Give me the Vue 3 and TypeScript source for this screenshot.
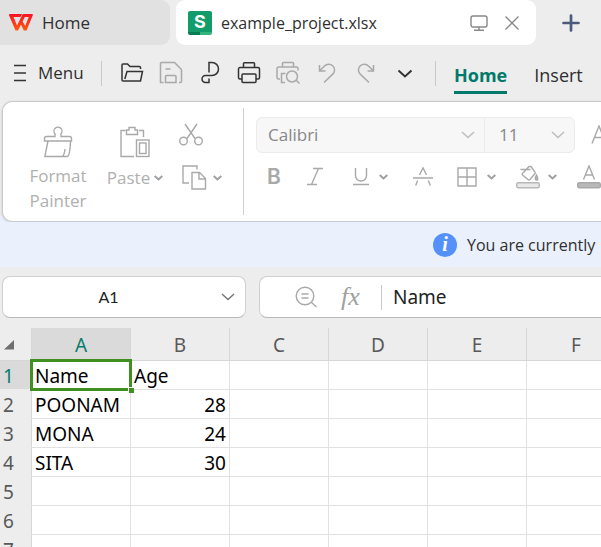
<script setup lang="ts">
import { ref } from 'vue'

const columns = ['A', 'B', 'C', 'D', 'E', 'F']
const rows: (string | number)[][] = [
  ['Name', 'Age'],
  ['POONAM', 28],
  ['MONA', 24],
  ['SITA', 30],
  [],
  [],
  [],
]
const cellName = ref('A1')
const formula = ref('Name')
const fontFamily = ref('Calibri')
const fontSize = ref('11')
</script>

<template>
  <div class="app">
    <nav class="tabs" aria-label="Documents">
      <button class="tab home-tab">
        <svg width="24" height="18" viewBox="0 0 24 18">
          <defs>
            <linearGradient id="brand" x1="0" y1="0" x2="0" y2="1">
              <stop offset="0" stop-color="#fb1026" />
              <stop offset="1" stop-color="#ff5a0a" />
            </linearGradient>
          </defs>
          <path fill="url(#brand)" fill-rule="evenodd" d="M1 0H13L11.5 3H4.500L8 11.500L13.200 1Q13.700 0 14.800 0H23Q24.300 0 23.800 1.200L17.500 16.500H14.800L12 10.500L9 16.500H6.500L0 1.200Q-.2 0 1 0ZM15.800 3L13.600 7.500L16.200 12L19.800 3Z" />
        </svg>
        <span>Home</span>
      </button>
      <div class="tab doc-tab">
        <span class="sheet-logo">S</span>
        <span class="doc-name">example_project.xlsx</span>
        <button aria-label="Display">
          <svg width="18" height="18" viewBox="0 0 18 18" fill="none" stroke="#888" stroke-width="1.4">
            <rect x="1" y="2" width="16" height="11" rx="2" />
            <path d="M9 13v3M4 16.3h10" />
          </svg>
        </button>
        <button aria-label="Close">
          <svg width="16" height="16" viewBox="0 0 16 16" fill="none" stroke="#888" stroke-width="1.3">
            <path d="M1.5 1.5l13 13M14.5 1.5l-13 13" />
          </svg>
        </button>
      </div>
      <button class="new-tab" aria-label="New tab">
        <svg width="18" height="18" viewBox="0 0 18 18" stroke="#4c5b7d" stroke-width="2.700" stroke-linecap="round">
          <path d="M9 1.5v15M1.5 9h15" />
        </svg>
      </button>
    </nav>

    <div class="toolbar">
      <button class="menu">
        <svg width="12" height="18" viewBox="0 0 12 18" stroke="#333" stroke-width="1.3">
          <path d="M0 1.5h12M0 9h12M0 16.5h12" />
        </svg>
        <span>Menu</span>
      </button>
      <i class="rule"></i>
      <div class="quick">
        <button aria-label="Open">
          <svg viewBox="0 0 24 24" class="dark">
            <path d="M20.500 8V6.500a1 1 0 0 0-1-1H10L7.500 3H3a1 1 0 0 0-1 1v15a1 1 0 0 0 1 1h17.500L22.500 10.500H7L4.800 18" />
          </svg>
        </button>
        <button aria-label="Save">
          <svg viewBox="0 0 24 24" class="pale">
            <path d="M4.500 21.500H1.500V2.500a1 1 0 0 1 1-1H15.500L22.500 8.500V20.500a1 1 0 0 1-1 1H20M6.500 8h5M6.500 21.500v-6a1 1 0 0 1 1-1h8.500a1 1 0 0 1 1 1v6z" />
          </svg>
        </button>
        <button aria-label="Export PDF">
          <svg viewBox="0 0 24 24" class="dark">
            <path d="M11 11.500V1.500H14a6.500 6.500 0 0 1 0 13H7.500a3.500 3.500 0 0 0 0 7H11V17.500" />
          </svg>
        </button>
        <button aria-label="Print">
          <svg viewBox="0 0 24 24" class="dark">
            <path d="M6.500 6V2.500a.8.8 0 0 1 .8-.8h9.400a.8.8 0 0 1 .8.800V6M4.500 18H3a1.500 1.500 0 0 1-1.500-1.500V8A1.500 1.500 0 0 1 3 6.500H21A1.500 1.500 0 0 1 22.500 8v8.500A1.500 1.500 0 0 1 21 18H19.500M5 14a1 1 0 0 1 1-1H18a1 1 0 0 1 1 1v6.500a1 1 0 0 1-1 1H6a1 1 0 0 1-1-1z" />
          </svg>
        </button>
        <button aria-label="Print preview">
          <svg viewBox="0 0 24 24" class="pale">
            <path d="M6.500 5.500V2.300a.8.8 0 0 1 .8-.8h9.400a.8.8 0 0 1 .8.800v3.200M4 18H2.500a1.500 1.500 0 0 1-1.500-1.500V7.500A1.500 1.500 0 0 1 2.500 6H20.500A1.500 1.500 0 0 1 22 7.500V9.500M9.500 12.500H5.500V21.500H9M20 19l3.500 3.500" />
            <circle cx="16" cy="15.500" r="5.500" />
          </svg>
        </button>
        <button aria-label="Undo">
          <svg viewBox="0 0 24 24" class="pale">
            <path d="M4.500 4v6h6M5 9.500L9.500 5a5.700 5.700 0 0 1 8.500 7.900L9 21.500" />
          </svg>
        </button>
        <button aria-label="Redo">
          <svg viewBox="0 0 24 24" class="pale">
            <path d="M19.500 4v6h-6M19 9.500L14.500 5a5.700 5.700 0 0 0-8.500 7.900L15 21.500" />
          </svg>
        </button>
        <button aria-label="More">
          <svg viewBox="0 0 24 24" class="dark bold"><path d="M5.500 9.500l6.500 6 6.500-6" /></svg>
        </button>
      </div>
      <i class="rule"></i>
      <button class="ribbon-tab active">Home</button>
      <button class="ribbon-tab">Insert</button>
    </div>

    <div class="ribbon-wrap">
      <section class="ribbon" aria-label="Home tools">
        <button class="big painter">
          <svg width="30" height="32" viewBox="0 0 30 32" class="line">
            <path d="M12 10.500V7.800A4 4 0 1 1 18 7.800v2.700h8.500a2 2 0 0 1 2 2V15H1.500v-2.500a2 2 0 0 1 2-2zM5 15L1.800 30.500H24.500q2.500-1 3-15.500M19.500 30.500q2-2 2.500-7.500" />
          </svg>
          <span>Format Painter</span>
        </button>
        <button class="big paste">
          <svg width="30" height="32" viewBox="0 0 30 32" class="line">
            <path d="M5.500 4.500H1V30.500H14M19 4.500H23.500V11M6.500 4v4.500h11V4H15V1.500H9V4z" />
            <rect x="16.500" y="14" width="12.500" height="16.500" />
            <rect x="19.500" y="17" width="6.500" height="10.500" />
          </svg>
          <span class="with-caret">Paste
            <svg class="caret" viewBox="0 0 9 8"><path d="M.7 2l3.800 3.500L8.300 2" /></svg>
          </span>
        </button>
        <div class="clip">
          <button aria-label="Cut">
            <svg width="24" height="24" viewBox="0 0 24 24" class="line">
              <path d="M6 1l10 14.500M18 1L8 15.500" />
              <circle cx="4.500" cy="18" r="3.800" />
              <circle cx="19.500" cy="18" r="3.800" />
            </svg>
          </button>
          <button class="with-caret" aria-label="Copy">
            <svg width="25" height="25" viewBox="0 0 25 25" class="line">
              <path d="M7 18H1V1H15V4.500M10 7.500H17.500L23.500 13.500V24H10zM17 7.500V14H23.500" />
            </svg>
            <svg class="caret" viewBox="0 0 9 8"><path d="M.7 2l3.800 3.500L8.300 2" /></svg>
          </button>
        </div>
        <i class="ribbon-rule"></i>
        <div class="font-tools">
          <div class="font-row">
            <div class="pickers">
              <label class="picker family">
                <select v-model="fontFamily" aria-label="Font"><option>Calibri</option></select>
                <svg viewBox="0 0 14 8"><path d="M1 1l6 5.500L13 1" /></svg>
              </label>
              <label class="picker size">
                <select v-model="fontSize" aria-label="Font size"><option>11</option></select>
                <svg viewBox="0 0 14 8"><path d="M1 1l6 5.500L13 1" /></svg>
              </label>
            </div>
            <button aria-label="Increase font size">
              <svg width="24" height="20" viewBox="0 0 24 20" class="line"><path d="M1 18.500L8 1l7 17.500M3.500 12.500h9" /></svg>
            </button>
          </div>
          <div class="format-row">
            <button class="letter-bold" aria-label="Bold">B</button>
            <button aria-label="Italic">
              <svg width="18" height="20" viewBox="0 0 18 20" class="line"><path d="M7 1.500h10M1 17.500h10M12.500 1.500l-7 16" /></svg>
            </button>
            <button class="with-caret underline" aria-label="Underline">
              <svg width="16" height="20" viewBox="0 0 16 20" class="line"><path d="M2.500 1v7.500a5.500 5.500 0 0 0 11 0V1M0 17.500h16" /></svg>
              <svg class="caret" viewBox="0 0 9 8"><path d="M.7 2l3.800 3.500L8.300 2" /></svg>
            </button>
            <button class="strike" aria-label="Strikethrough">
              <svg width="20" height="20" viewBox="0 0 20 20" class="line"><path d="M6.500 8L10 .8l3.500 7.200M0 11h20M4.700 13.500l-2 5M15.300 13.500l2 5" /></svg>
            </button>
            <button class="with-caret" aria-label="Borders">
              <svg width="20" height="20" viewBox="0 0 20 20" class="line"><path d="M1 1h18v18H1zM10 1v18M1 10h18" /></svg>
              <svg class="caret" viewBox="0 0 9 8"><path d="M.7 2l3.800 3.500L8.300 2" /></svg>
            </button>
            <button class="with-caret fill-color" aria-label="Fill colour">
              <svg width="24" height="24" viewBox="0 0 24 24" class="line">
                <path d="M4.500 4.500h10M7.500 7.500L13 1.500H15L19 7q.5 1 0 1.500L14 14.500q-1 1-2 0L6.500 10q-1-1 1-2.500" />
                <path class="solid" d="M20.500 10q-2.500 4.500 0 5t0-5z" />
                <rect class="swatch" x=".7" y="17.700" width="22.600" height="5" rx="1.500" />
              </svg>
              <svg class="caret" viewBox="0 0 9 8"><path d="M.7 2l3.800 3.500L8.300 2" /></svg>
            </button>
            <button aria-label="Font colour">
              <svg width="24" height="24" viewBox="0 0 24 24" class="line">
                <path d="M6.500 14.500L12 1l5.500 13.500M8.500 10h7" />
                <rect class="solid" x=".7" y="17.700" width="22.600" height="5" rx="1.500" />
              </svg>
            </button>
          </div>
        </div>
      </section>
    </div>

    <div class="notice" role="status">
      <span class="info">i</span>
      <span>You are currently</span>
    </div>

    <div class="formula-bar">
      <label class="name-box">
        <input v-model="cellName" aria-label="Name box" />
        <svg viewBox="0 0 14 8"><path d="M1 1l6 5.500L13 1" /></svg>
      </label>
      <div class="formula-box">
        <button aria-label="Zoom out">
          <svg width="23" height="23" viewBox="0 0 23 23" class="line">
            <circle cx="10" cy="10" r="8.800" />
            <path d="M6.500 8h7M6.500 12h7M16.500 16.500l5 4.500" />
          </svg>
        </button>
        <button class="fx" aria-label="Insert function">fx</button>
        <i class="rule"></i>
        <input v-model="formula" aria-label="Formula" />
      </div>
    </div>

    <main class="sheet">
      <table>
        <colgroup>
          <col class="index-col" />
          <col v-for="c in columns" :key="c" class="data-col" />
        </colgroup>
        <thead>
          <tr>
            <th class="corner">
              <svg width="10" height="10" viewBox="0 0 10 10"><path d="M10 0v9.500H0z" fill="#6f6f6f" /></svg>
            </th>
            <th v-for="(c, i) in columns" :key="c" scope="col" :class="{ current: i === 0 }">{{ c }}</th>
          </tr>
        </thead>
        <tbody>
          <tr v-for="(row, r) in rows" :key="r">
            <th scope="row" :class="{ current: r === 0 }">{{ r + 1 }}</th>
            <td
              v-for="(c, i) in columns"
              :key="c"
              :class="{ number: typeof row[i] === 'number', selected: r === 0 && i === 0 }"
            >{{ row[i] }}</td>
          </tr>
        </tbody>
      </table>
    </main>
  </div>
</template>

<style>
body {
  overflow: hidden;
}
</style>

<style scoped>
.app {
  height: 100vh;
  overflow: hidden;
  display: flex;
  flex-direction: column;
  background: #ededed;
  color: #2f2f2f;
  font: 17px/24px "Open Sans", "Noto Sans", sans-serif;
}
.app * {
  box-sizing: border-box;
}
button,
input,
select {
  margin: 0;
  padding: 0;
  border: 0;
  background: none;
  color: inherit;
  font: inherit;
}
button {
  display: flex;
  align-items: center;
  flex: none;
}
svg {
  display: block;
  flex: none;
}

/* Document tabs */
.tabs {
  display: flex;
  height: 45px;
  flex: none;
}
.tab {
  display: flex;
  align-items: center;
  gap: 9px;
}
.home-tab {
  width: 170px;
  padding-left: 9px;
  background: #e1e1e1;
  border-radius: 0 9px 9px 0;
}
.doc-tab {
  flex: 0 1 360px;
  margin-left: 6px;
  padding: 0 16px 0 12px;
  background: #fff;
  border-radius: 9px;
}
.doc-name {
  flex: 1;
  font-size: 16px;
  white-space: nowrap;
}
.doc-tab button + button {
  margin-left: 7px;
}
.sheet-logo {
  width: 24px;
  height: 24px;
  border-radius: 2px;
  background: linear-gradient(90deg, #0a7d53 50%, #35b37d 50%) bottom / 100% 3px no-repeat #119c69;
  color: #fff;
  font: 700 18px/21px Inter, sans-serif;
  text-align: center;
}
.new-tab {
  margin-left: 26px;
}

/* Quick access toolbar */
.toolbar {
  display: flex;
  align-items: center;
  height: 56px;
  flex: none;
  padding-left: 14px;
}
.menu {
  gap: 12px;
  width: 87px;
}
.rule {
  width: 1px;
  height: 25px;
  flex: none;
  background: #c9c9c9;
}
.quick {
  display: flex;
  gap: 15px;
  margin: 0 18px;
}
.quick svg {
  width: 24px;
  height: 24px;
  fill: none;
  stroke-width: 1.500;
}
.quick .dark {
  stroke: #333;
}
.quick .bold {
  stroke-width: 2;
}
.quick .pale {
  stroke: #a9a9a9;
}
.ribbon-tab {
  margin-left: 27px;
  font-size: 18px;
  line-height: 32px;
  padding-top: 6px;
  border-bottom: 3px solid transparent;
}
.ribbon-tab.active {
  margin-left: 18px;
  color: #017a6b;
  font-weight: 700;
  border-color: #017a6b;
}

/* Ribbon */
.ribbon-wrap {
  flex: none;
  padding-left: 2px;
  background: linear-gradient(#ededed 95%, #eaf1fd 95%);
}
.ribbon {
  display: flex;
  height: 121px;
  padding-top: 6px;
  background: #fff;
  border: 1px solid #c9c9c9;
  border-right: 0;
  border-radius: 10px 0 0 10px;
  box-shadow: 0 1px 3px #0002;
  color: #b0b0b0;
}
.line {
  fill: none;
  stroke: #a9a9a9;
  stroke-width: 1.400;
}
.solid {
  fill: #b8b8b8;
}
.swatch {
  fill: #e8e8e8;
  stroke: #b8b8b8;
}
.caret {
  width: 9px;
  height: 8px;
  fill: none;
  stroke: #a0a0a0;
  stroke-width: 2;
}
.with-caret {
  display: flex;
  align-items: center;
  gap: 5px;
}
.big {
  flex-direction: column;
  padding-top: 18px;
  gap: 5px;
}
.big span {
  line-height: 25px;
}
.painter {
  width: 62px;
  margin-left: 24px;
}
.paste {
  width: 54px;
  margin-left: 19px;
  gap: 7px;
}
.paste .with-caret {
  gap: 4px;
}
.clip {
  display: flex;
  flex: none;
  flex-direction: column;
  gap: 18px;
  width: 64px;
  margin-left: 17px;
  padding-top: 15px;
}
.clip .with-caret {
  gap: 6px;
  padding-left: 3px;
}
.ribbon-rule {
  width: 1px;
  height: 107px;
  margin: 0 12px 0 0;
  flex: none;
  background: #d2d2d2;
}
.font-tools {
  flex: none;
  padding-top: 9px;
}
.font-row {
  display: flex;
  gap: 16px;
}
.pickers {
  display: flex;
  height: 36px;
  background: #f7f7f7;
  border: 1px solid #ebebeb;
  border-radius: 6px;
}
.picker {
  display: flex;
  align-items: center;
  padding: 0 9px 0 11px;
}
.picker select {
  flex: 1;
  min-width: 0;
  appearance: none;
  color: #888;
}
.picker svg,
.name-box svg {
  width: 14px;
  height: 8px;
  fill: none;
  stroke: #bdbdbd;
  stroke-width: 1.500;
}
.family {
  width: 227px;
}
.size {
  width: 90px;
  padding-left: 14px;
  border-left: 1px solid #ebebeb;
}
.format-row {
  display: flex;
  align-items: center;
  height: 26px;
  margin-top: 11px;
  padding-left: 11px;
}
.letter-bold {
  width: 39px;
  color: #a9a9a9;
  font: 600 21px/24px Inter, sans-serif;
}
.underline {
  margin-left: 29px;
}
.format-row .with-caret {
  gap: 10px;
}
.strike {
  margin: 0 24px 0 25px;
}
.format-row .fill-color {
  gap: 8px;
  margin: 0 20px;
}

/* Notice */
.notice {
  display: flex;
  align-items: center;
  gap: 10px;
  height: 45px;
  flex: none;
  padding-left: 433px;
  background: #eaf1fd;
  font-size: 16px;
  white-space: nowrap;
}
.info {
  width: 24px;
  height: 24px;
  flex: none;
  border-radius: 50%;
  background: #5590fb;
  color: #fff;
  font: italic 700 20px/23px "Liberation Serif", serif;
  text-align: center;
}

/* Formula bar */
.formula-bar {
  display: flex;
  gap: 13px;
  height: 61px;
  flex: none;
  padding: 9px 0 10px 2px;
}
.name-box,
.formula-box {
  display: flex;
  align-items: center;
  background: #fff;
  border: 1px solid #d0d0d0;
  border-bottom-color: #b9b9b9;
  border-radius: 8px;
}
.name-box {
  flex: 0 0 244px;
  padding-right: 10px;
}
.name-box input {
  flex: 1;
  min-width: 0;
  padding-right: 7px;
  color: #222;
  font: 16px/24px Lato, sans-serif;
  text-align: center;
}
.name-box svg {
  stroke: #777;
}
.formula-box {
  flex: 1;
  min-width: 0;
  padding-left: 35px;
  border-right: 0;
  border-radius: 8px 0 0 8px;
}
.fx {
  width: 40px;
  margin-left: 23px;
  color: #a0a0a0;
  font: italic 26px/28px "Liberation Serif", serif;
}
.formula-box input {
  flex: 1;
  min-width: 0;
  margin-left: 11px;
  color: #222;
  font-family: "Noto Sans", sans-serif;
  font-size: 19px;
}

/* Grid */
.sheet {
  flex: 1;
  min-height: 0;
  overflow: hidden;
  background: #fff;
}
table {
  width: 626px;
  table-layout: fixed;
  border-spacing: 0;
  font: 19px/26px "Noto Sans", sans-serif;
}
.index-col {
  width: 32px;
}
.data-col {
  width: 99px;
}
th,
td {
  height: 29px;
  padding: 2px 3px 0;
  border: solid #e1e1e1;
  border-width: 0 1px 1px 0;
}
th {
  background: #ededed;
  border-color: #d6d6d6;
  color: #595959;
  font-weight: 400;
}
thead th {
  height: 33px;
}
thead .corner {
  padding-left: 4px;
}
tbody th {
  text-align: left;
  border-bottom-color: #ededed;
}
.current {
  background: #dadada;
  color: #087c6c;
}
td {
  color: #000;
}
.number {
  text-align: right;
}
.selected {
  position: relative;
}
.selected::before {
  content: "";
  position: absolute;
  inset: -2px;
  border: 3px solid #3f901f;
}
.selected::after {
  content: "";
  position: absolute;
  right: -4px;
  bottom: -4px;
  width: 6px;
  height: 6px;
  background: #3f901f;
  border: solid #fff;
  border-width: 1px 0 0 1px;
  box-sizing: border-box;
}
</style>
